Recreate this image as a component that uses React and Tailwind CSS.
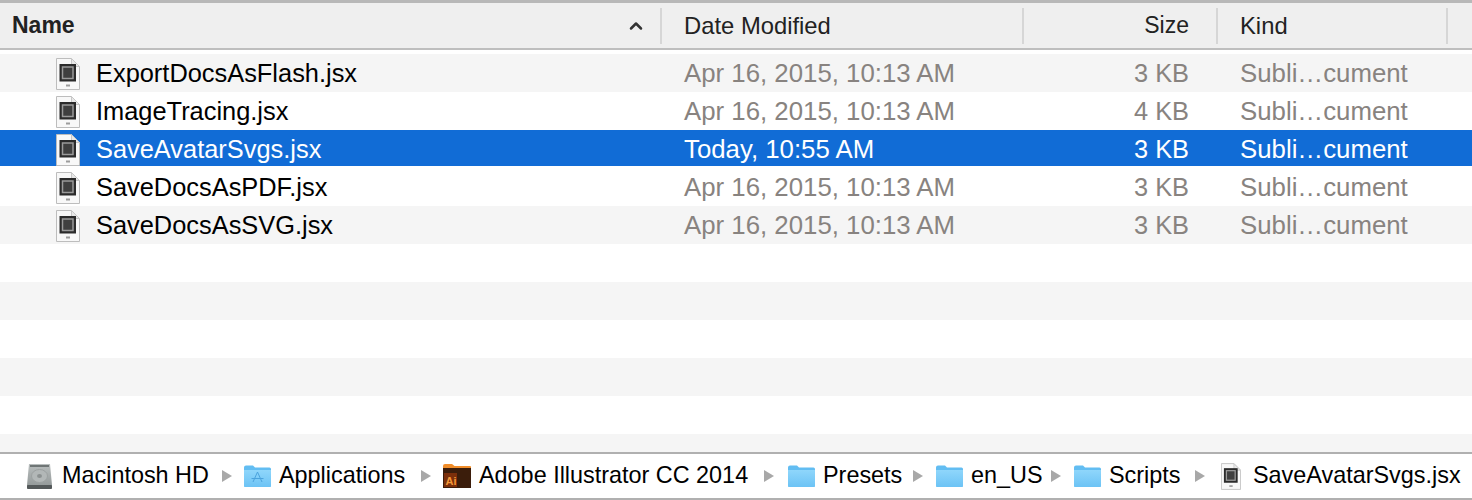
import { ChevronUp } from 'lucide-react';

const files = [
  { name: 'ExportDocsAsFlash.jsx', date: 'Apr 16, 2015, 10:13 AM', size: '3 KB', bg: 'bg-[#f5f5f5]' },
  { name: 'ImageTracing.jsx', date: 'Apr 16, 2015, 10:13 AM', size: '4 KB', bg: 'bg-white' },
  { name: 'SaveAvatarSvgs.jsx', date: 'Today, 10:55 AM', size: '3 KB', bg: 'bg-[#116cd6] shadow-[inset_0_-2px_0_#fff]', selected: true },
  { name: 'SaveDocsAsPDF.jsx', date: 'Apr 16, 2015, 10:13 AM', size: '3 KB', bg: 'bg-white' },
  { name: 'SaveDocsAsSVG.jsx', date: 'Apr 16, 2015, 10:13 AM', size: '3 KB', bg: 'bg-[#f5f5f5]' },
];

const emptyRows = ['bg-white', 'bg-[#f5f5f5]', 'bg-white', 'bg-[#f5f5f5]', 'bg-white'];

function JsxIcon({ className }) {
  return (
    <svg viewBox="0 0 24 32" className={className}>
      <path d="M.5.5H15.500L23.500 8.500V31.500H.5Z" fill="#f8f8f8" stroke="#bdbdbd" />
      <path d="M15.500 .5V8.500H23.500Z" fill="#e8e8e8" stroke="#c8c8c8" />
      <rect x="3.500" y="6" width="16.500" height="17.500" fill="#2b2b2b" />
      <rect x="6.500" y="9" width="10.500" height="11.500" fill="#3f3f3f" stroke="#9a9a9a" strokeWidth="1.500" />
      <rect x="10" y="26.500" width="4" height="2" fill="#9c9c9c" />
    </svg>
  );
}

function FolderIcon({ app }) {
  return (
    <svg viewBox="0 0 27 22" className="w-[27px] h-[22px] shrink-0">
      <defs>
        <linearGradient id="folderBody" x1="0" y1="0" x2="0" y2="1">
          <stop offset="0" stopColor="#8fd6fb" />
          <stop offset="1" stopColor="#6cc3f5" />
        </linearGradient>
      </defs>
      <path d="M0 2.500Q0 .5 2 .5H9L11 2.500H25.500Q27 2.500 27 4V20.500Q27 22 25.500 22H1.500Q0 22 0 20.500Z" fill="#62bdf2" />
      <path d="M0 5H27V20.500Q27 22 25.500 22H1.500Q0 22 0 20.500Z" fill="url(#folderBody)" />
      {app && <path d="M13.500 7L9 17M13.500 7L18 17M7.500 13.500H19.500" stroke="#4ba3dd" strokeWidth="1" fill="none" />}
    </svg>
  );
}

function DiskIcon() {
  return (
    <svg viewBox="0 0 25 25" className="w-[25px] h-[25px] shrink-0">
      <defs>
        <linearGradient id="diskBody" x1="0" y1="0" x2="0" y2="1">
          <stop offset="0" stopColor="#b9bebe" />
          <stop offset="1" stopColor="#8f9595" />
        </linearGradient>
      </defs>
      <path d="M2 0H23L25 21V23Q25 25 23 25H2Q0 25 0 23V21Z" fill="url(#diskBody)" />
      <rect x="3" y="1" width="19" height="2" fill="#6f7575" />
      <ellipse cx="12.500" cy="12" rx="8" ry="6.500" fill="#b2b7b7" stroke="#9ca1a1" />
      <ellipse cx="12.500" cy="12" rx="2.500" ry="2" fill="#8b9090" />
      <rect x="0" y="21" width="25" height="4" rx="1" fill="#54595a" />
    </svg>
  );
}

function AiIcon() {
  return (
    <svg viewBox="0 0 28 24" className="w-7 h-6 shrink-0">
      <path d="M0 2Q0 0 2 0H9L11.500 2H27Q28 2 28 3V6H0Z" fill="#f08d2a" />
      <rect x="0" y="4" width="28" height="20" fill="#3b1d0b" />
      <rect x="1" y="9" width="13" height="14" fill="#7c2f0a" />
      <text x="2.500" y="20.500" fontSize="11" fontWeight="700" fill="#f59a3a" fontFamily="Liberation Sans, sans-serif">Ai</text>
    </svg>
  );
}

const crumbs = [
  { label: 'Macintosh HD', icon: <DiskIcon />, ml: 'ml-[27px]', gap: 'ml-[10px]', w: 'w-[148px]' },
  { label: 'Applications', icon: <FolderIcon app />, ml: 'ml-[12px]', gap: 'ml-[8px]', w: 'w-[130px]' },
  { label: 'Adobe Illustrator CC 2014', icon: <AiIcon />, ml: 'ml-[12px]', gap: 'ml-[8px]', w: 'w-[273px]' },
  { label: 'Presets', icon: <FolderIcon />, ml: 'ml-[14px]', gap: 'ml-[8px]', w: 'w-[78px]' },
  { label: 'en_US', icon: <FolderIcon />, ml: 'ml-[13px]', gap: 'ml-[8px]', w: 'w-[68px]' },
  { label: 'Scripts', icon: <FolderIcon />, ml: 'ml-[13px]', gap: 'ml-[8px]', w: 'w-[74px]' },
  { label: 'SaveAvatarSvgs.jsx', icon: <JsxIcon className="w-5 h-[27px] shrink-0" />, ml: 'ml-[16px]', gap: 'ml-[12px]', w: 'w-[207px]', last: true },
];

function Crumb({ icon, label, ml, gap, w, last }) {
  return (
    <div className={`flex items-center shrink-0 ${ml}`}>
      {icon}
      <span className={`${gap} ${w} whitespace-nowrap text-black`}>{label}</span>
      {!last && <span className="ml-3 w-0 h-0 border-y-[6px] border-y-transparent border-l-[10px] border-l-[#a8a8a8]" />}
    </div>
  );
}

export default function App() {
  return (
    <div className="w-[1472px] h-[500px] overflow-hidden bg-white flex flex-col text-[23.800px] leading-none font-['Liberation_Sans',Arial,sans-serif]">
      {/* column headers */}
      <div className="h-[50px] shrink-0 flex items-center bg-[#efefef] border-t-[3px] border-b-2 border-t-[#b8b8b8] border-b-[#bebebe] text-[#222]">
        <div className="w-[662px] h-[36px] flex items-center justify-between pl-3 pr-[14px] border-r-2 border-[#d6d6d6]">
          <span className="font-bold text-[23px]">Name</span>
          <ChevronUp size={20} strokeWidth={3} className="text-[#333]" />
        </div>
        <div className="w-[362px] h-[36px] flex items-center pl-[22px] border-r-2 border-[#d6d6d6]">Date Modified</div>
        <div className="w-[194px] h-[36px] flex items-center justify-end pr-[27px] border-r-2 border-[#d6d6d6] text-[23px]">Size</div>
        <div className="w-[230px] h-[36px] flex items-center pl-[22px] border-r-2 border-[#d6d6d6]">Kind</div>
      </div>

      <div className="h-[4px] shrink-0 bg-white" />

      {/* file rows */}
      {files.map((f) => (
        <div key={f.name} className={`h-[38px] shrink-0 flex items-center pt-[2px] text-[25.400px] ${f.bg} ${f.selected ? 'text-white' : 'text-[#888380]'}`}>
          <div className="w-[662px] flex items-center pl-[56px]">
            <JsxIcon className="w-6 h-8 shrink-0" />
            <span className={`ml-4 ${f.selected ? 'text-white' : 'text-black'}`}>{f.name}</span>
          </div>
          <div className="w-[362px] pl-[22px] text-[25.800px]">{f.date}</div>
          <div className="w-[194px] pr-[29px] text-right">{f.size}</div>
          <div className="pl-[22px] text-[25.800px]">Subli…cument</div>
        </div>
      ))}
      {emptyRows.map((bg, i) => (
        <div key={i} className={`h-[38px] shrink-0 ${bg}`} />
      ))}
      <div className="h-[18px] shrink-0 bg-[#f5f5f5]" />

      {/* path bar */}
      <div className="h-[48px] shrink-0 flex items-center bg-white border-y-2 border-[#b0b0b0] text-[23.400px]">
        {crumbs.map((c) => (
          <Crumb key={c.label} {...c} />
        ))}
      </div>
    </div>
  );
}
